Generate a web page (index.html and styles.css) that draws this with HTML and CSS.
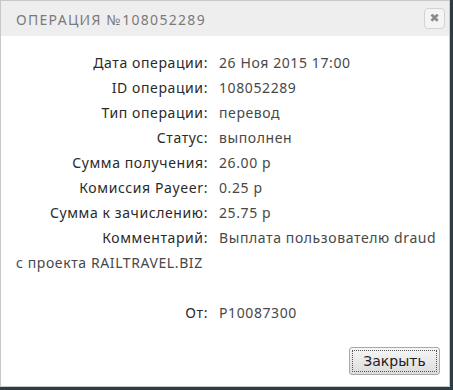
FILE: index.html
```html
<!DOCTYPE html>
<html lang="ru">
<head>
    <meta charset="UTF-8">
    <title>Операция</title>
    <link rel="stylesheet" href="styles.css">
</head>
<body>

<div class="dialog">
    <div class="dialog-title">
        <span class="title-text">Операция №108052289</span>
        <button class="close-x" title="close">&#10006;</button>
    </div>
    <div class="dialog-body">
        <p class="row"><span class="label">Дата операции:</span><span class="value">26 Ноя 2015 17:00</span></p>
        <p class="row"><span class="label">ID операции:</span><span class="value">108052289</span></p>
        <p class="row"><span class="label">Тип операции:</span><span class="value">перевод</span></p>
        <p class="row"><span class="label">Статус:</span><span class="value">выполнен</span></p>
        <p class="row"><span class="label">Сумма получения:</span><span class="value">26.00 р</span></p>
        <p class="row"><span class="label">Комиссия Payeer:</span><span class="value">0.25 р</span></p>
        <p class="row"><span class="label">Сумма к зачислению:</span><span class="value">25.75 р</span></p>
        <p class="row"><span class="label">Комментарий:</span>Выплата пользователю draud<br>с проекта RAILTRAVEL.BIZ</p>
        <p class="row empty">&nbsp;</p>
        <p class="row"><span class="label">От:</span><span class="value">P10087300</span></p>
    </div>
    <div class="dialog-buttons">
        <button class="close-btn">Закрыть</button>
    </div>
</div>

</body>
</html>
```

FILE: styles.css
```css
body {
    margin: 0;
    background-color: #2e3c43;
    font-family: "Noto Sans", sans-serif;
}
.dialog {
    width: 448px;
    height: 385px;
    background-color: #ffffff;
    border: 1px solid #c8c8c8;
    display: flex;
    flex-direction: column;
}
.dialog-title {
    height: 35px;
    background-color: #eeeeee;
    display: flex;
    align-items: center;
    justify-content: space-between;
    padding: 0 4px 0 15px;
}
.title-text {
    text-transform: uppercase;
    font-size: 14px;
    letter-spacing: 1.3px;
    color: #7a7a7a;
    padding-top: 1px;
}
.close-x {
    width: 21px;
    height: 21px;
    padding: 0;
    border: 1px solid #d3d3d3;
    border-radius: 4px;
    background-color: #f4f4f4;
    color: #8a8a8a;
    font-size: 12px;
    font-weight: bold;
    line-height: 19px;
    font-family: "DejaVu Sans", sans-serif;
}
.dialog-body {
    flex: 1;
    padding: 14px 10px 0 15px;
    font-size: 14px;
    letter-spacing: 0.6px;
    color: #484848;
}
.row {
    margin: 0;
    line-height: 25px;
}
.label {
    display: inline-block;
    width: 192px;
    text-align: right;
    margin-right: 11px;
    color: #2a2a2a;
}
.value {
    color: #484848;
}
.dialog-buttons {
    display: flex;
    justify-content: flex-end;
    padding: 0 9px 11px 0;
}
.close-btn {
    width: 91px;
    height: 28px;
    font-family: "DejaVu Sans", sans-serif;
    font-size: 14px;
    color: #222222;
    border: 1px solid #a8a8a8;
    border-radius: 3px;
    background: linear-gradient(#f7f7f7, #e6e6e6 60%, #dcdcdc);
    outline: 1px dotted #555555;
    outline-offset: -4px;
}
```
